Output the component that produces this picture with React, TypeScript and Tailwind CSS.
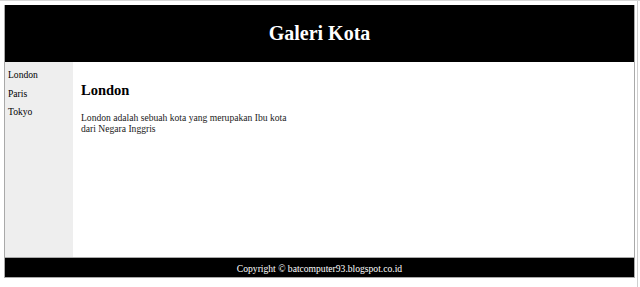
export default function App() {
  return (
    <div className="w-[640px] h-[287px] bg-white border-t border-[#d6d6d6] flex overflow-hidden font-['Liberation_Serif',serif] text-black">
      <div className="ml-[4px] mt-[4px] w-[631px] h-[273px] border-x border-[#a9a9a9] flex flex-col">
        <header className="h-[57px] bg-black flex items-center justify-center">
          <h1 className="text-white font-bold text-[20px] leading-[57px]">Galeri Kota</h1>
        </header>
        <div className="h-[196px] flex border-b border-[#a9a9a9]">
          <nav className="w-[68px] bg-[#eeeeee] pt-[4px] pl-[3px]">
            <ul className="text-[9.6px] leading-[18.5px]">
              <li>London</li>
              <li>Paris</li>
              <li>Tokyo</li>
            </ul>
          </nav>
          <main className="flex-1 pl-[8px] pt-[20px]">
            <h2 className="font-bold text-[14.5px] leading-[17.25px]">London</h2>
            <p className="mt-[13px] w-[215px] text-[9.6px] leading-[11px] text-[#1a1a1a]">
              London adalah sebuah kota yang merupakan Ibu kota dari Negara Inggris
            </p>
          </main>
        </div>
        <footer className="h-[20px] bg-black border-b border-[#a9a9a9] flex justify-center pt-[1px]">
          <span className="text-white text-[9.6px] leading-[19px]">
            Copyright © batcomputer93.blogspot.co.id
          </span>
        </footer>
      </div>
      <div className="ml-[2px] w-[1px] h-full bg-[#cfcfcf]" />
    </div>
  );
}
